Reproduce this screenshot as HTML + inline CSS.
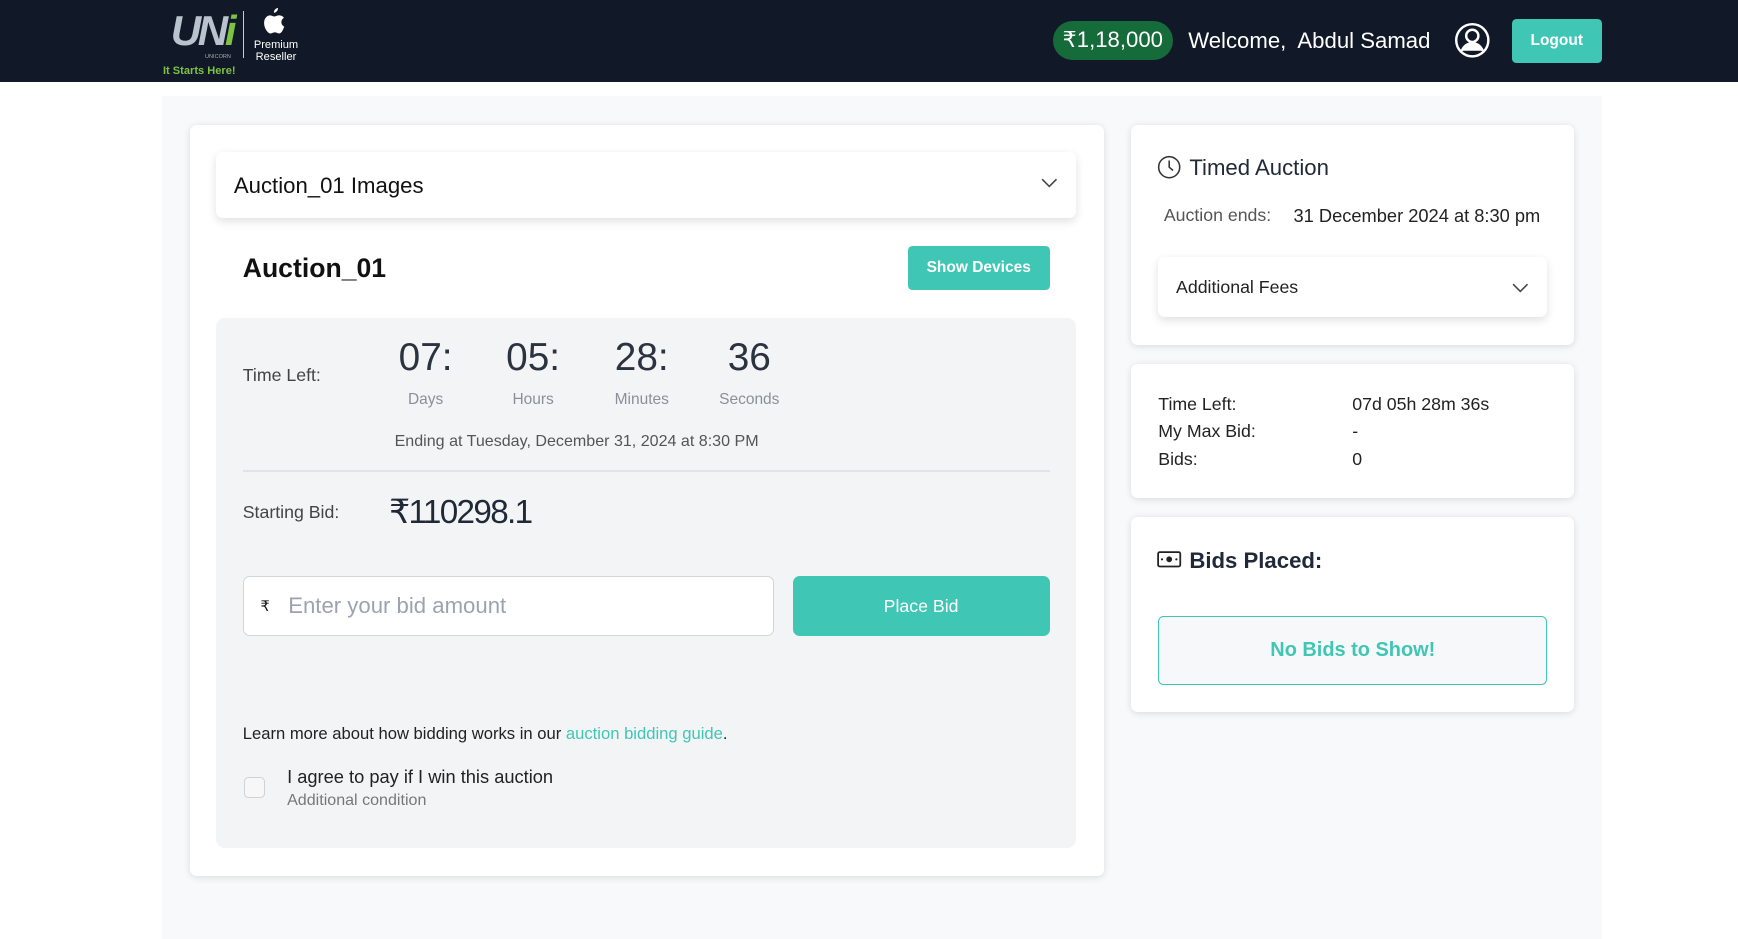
<!DOCTYPE html>
<html><head><meta charset="utf-8"><style>
html{zoom:1.10842}
*{box-sizing:border-box;margin:0;padding:0}
body{width:1568px;height:826px;overflow:hidden;background:#fff;font-family:"Liberation Sans",sans-serif;color:#1f2937;position:relative}
.a{position:absolute}
.nav{left:0;top:0;width:1568px;height:74px;background:#111827}
.card{background:#fff;border-radius:6px;box-shadow:0 1px 6px rgba(0,0,0,.12)}
.teal{background:#40c6b4;color:#fff;border-radius:4px;display:flex;align-items:center;justify-content:center;font-weight:bold}
.num{font-size:35px;color:#2b3340;width:90px;text-align:center;-webkit-text-stroke:0}
.lbl{font-size:14px;color:#8a8f98;width:90px;text-align:center}
</style></head><body>
<div class="a nav"></div>
<!-- logo -->
<div class="a" style="left:154px;top:8px;font-size:38px;font-weight:bold;font-style:italic;color:#b9c3cf;letter-spacing:-3px;line-height:40px">UN<span style="color:#7dc242">i</span></div>
<div class="a" style="left:185px;top:49px;font-size:5px;color:#aaa">UNICORN</div>
<div class="a" style="left:147px;top:59px;font-size:10px;font-weight:bold;color:#7dc242">It Starts Here!</div>
<div class="a" style="left:219px;top:10px;width:1px;height:42px;background:#ccc"></div>
<svg class="a" style="left:237px;top:7px" width="20" height="24" viewBox="0 0 20 24"><path d="M13.5 0c.2 2-1.5 4.2-3.6 4.3-.3-2 1.5-4.1 3.6-4.3zM16.6 12.7c0 3 2.6 4 2.6 4-.6 2-2.4 6.3-4.6 6.3-1.6 0-2-1-3.9-1-1.9 0-2.4 1-3.9 1C4.6 23 1 18.6 1 13.4 1 9 3.8 6.6 6.4 6.6c1.7 0 2.8 1.1 4 1.1 1.1 0 2.6-1.2 4.4-1.1.7 0 2.8.3 4.1 2.2-.1.1-2.3 1.4-2.3 3.9z" fill="#fff"/></svg>
<div class="a" style="left:229px;top:35px;font-size:10px;color:#fff;text-align:center;line-height:11px">Premium<br>Reseller</div>
<div class="a" style="left:950px;top:19px;width:108px;height:35px;border-radius:18px;background:#166b3a;color:#fff;font-size:20px;display:flex;align-items:center;justify-content:center">₹1,18,000</div>
<div class="a" style="left:1072px;top:25px;font-size:20px;color:#fff">Welcome,&nbsp; Abdul Samad</div>
<svg class="a" style="left:1312px;top:20px" width="33" height="33" viewBox="0 0 33 33"><circle cx="16.5" cy="16.5" r="14.5" fill="none" stroke="#fff" stroke-width="2.2"/><circle cx="16.5" cy="12.5" r="5.5" fill="none" stroke="#fff" stroke-width="2.2"/><path d="M7 26c2-5 6-7 9.5-7s7.5 2 9.5 7" fill="#fff" stroke="#fff" stroke-width="2"/></svg>
<div class="a teal" style="left:1364px;top:17px;width:81px;height:40px;font-size:14px">Logout</div>

<div class="a" style="left:146px;top:87px;width:1299px;height:760px;background:#f8f9fa"></div>
<!-- left card -->
<div class="a card" style="left:171px;top:113px;width:825px;height:677px"></div>
<div class="a card" style="left:195px;top:137px;width:776px;height:60px;box-shadow:0 3px 8px rgba(0,0,0,.12)"></div>
<div class="a" style="left:211px;top:156px;font-size:20px;color:#111">Auction_01 Images</div>
<svg class="a" style="left:939px;top:160px" width="15" height="10"><path d="M1 2l6.5 6.5L14 2" fill="none" stroke="#444" stroke-width="1.4"/></svg>
<div class="a" style="left:219px;top:228px;font-size:24px;font-weight:bold;color:#111">Auction_01</div>
<div class="a teal" style="left:819px;top:222px;width:128px;height:40px;font-size:14px">Show Devices</div>
<div class="a" style="left:195px;top:287px;width:776px;height:478px;background:#f3f4f6;border-radius:8px"></div>
<div class="a" style="left:219px;top:329px;font-size:16px;color:#444">Time Left:</div>
<div class="a num" style="left:339px;top:303px">07:</div>
<div class="a num" style="left:436px;top:303px">05:</div>
<div class="a num" style="left:534px;top:303px">28:</div>
<div class="a num" style="left:631px;top:303px">36</div>
<div class="a lbl" style="left:339px;top:353px">Days</div>
<div class="a lbl" style="left:436px;top:353px">Hours</div>
<div class="a lbl" style="left:534px;top:353px">Minutes</div>
<div class="a lbl" style="left:631px;top:353px">Seconds</div>
<div class="a" style="left:356px;top:390px;font-size:14.5px;color:#555">Ending at Tuesday, December 31, 2024 at 8:30 PM</div>
<div class="a" style="left:219px;top:424px;width:728px;height:2px;background:#e1e3e6"></div>
<div class="a" style="left:219px;top:453px;font-size:16px;color:#444">Starting Bid:</div>
<div class="a" style="left:351px;top:444px;font-size:30px;color:#1f2937;letter-spacing:-1.5px">₹110298.1</div>
<div class="a" style="left:219px;top:520px;width:479px;height:54px;background:#fff;border:1px solid #d1d5db;border-radius:6px"></div>
<div class="a" style="left:235px;top:540px;font-size:13px;color:#111">₹</div>
<div class="a" style="left:260px;top:535px;font-size:20px;color:#9ca3af">Enter your bid amount</div>
<div class="a teal" style="left:715px;top:520px;width:232px;height:54px;font-size:16px;border-radius:6px;font-weight:normal">Place Bid</div>
<div class="a" style="left:219px;top:653px;font-size:15px;color:#222">Learn more about how bidding works in our <span style="color:#40c6b4">auction bidding guide</span>.</div>
<div class="a" style="left:220px;top:701px;width:19px;height:19px;border:1.5px solid #cfd3d8;border-radius:4px;background:#f7f7f8"></div>
<div class="a" style="left:259px;top:691px;font-size:16.5px;color:#222">I agree to pay if I win this auction</div>
<div class="a" style="left:259px;top:714px;font-size:14.5px;color:#777">Additional condition</div>

<!-- right cards -->
<div class="a card" style="left:1020px;top:113px;width:400px;height:198px"></div>
<svg class="a" style="left:1044px;top:140px" width="22" height="22" viewBox="0 0 22 22"><circle cx="11" cy="11" r="9.5" fill="none" stroke="#333" stroke-width="1.4"/><path d="M11 5v6l3.5 3" fill="none" stroke="#333" stroke-width="1.4"/></svg>
<div class="a" style="left:1073px;top:140px;font-size:20px;color:#1f2937">Timed Auction</div>
<div class="a" style="left:1050px;top:185px;font-size:16px;color:#555">Auction ends:</div>
<div class="a" style="left:1167px;top:185px;font-size:16.5px;color:#222">31 December 2024 at 8:30 pm</div>
<div class="a card" style="left:1045px;top:232px;width:351px;height:54px;box-shadow:0 3px 8px rgba(0,0,0,.12)"></div>
<div class="a" style="left:1061px;top:250px;font-size:16px;color:#222">Additional Fees</div>
<svg class="a" style="left:1364px;top:254px" width="15" height="10"><path d="M1 2l6.5 6.5L14 2" fill="none" stroke="#444" stroke-width="1.4"/></svg>

<div class="a card" style="left:1020px;top:328px;width:400px;height:121px"></div>
<div class="a" style="left:1045px;top:353px;font-size:16px;color:#222;line-height:24.5px">Time Left:<br>My Max Bid:<br>Bids:</div>
<div class="a" style="left:1220px;top:353px;font-size:16px;color:#222;line-height:24.5px">07d 05h 28m 36s<br>-<br>0</div>

<div class="a card" style="left:1020px;top:466px;width:400px;height:176px"></div>
<svg class="a" style="left:1044px;top:497px" width="22" height="15" viewBox="0 0 22 15"><rect x="1" y="1" width="20" height="13" rx="1.5" fill="none" stroke="#222" stroke-width="1.6"/><circle cx="11" cy="7.5" r="2.6" fill="#222"/><circle cx="4.5" cy="7.5" r="1" fill="#222"/><circle cx="17.5" cy="7.5" r="1" fill="#222"/></svg>
<div class="a" style="left:1073px;top:494px;font-size:20px;font-weight:bold;color:#1f2937">Bids Placed:</div>
<div class="a" style="left:1045px;top:556px;width:351px;height:62px;border:1px solid #40c6b4;border-radius:5px;background:#f7f8f9;display:flex;align-items:center;justify-content:center;color:#40c6b4;font-size:18px;font-weight:bold">No Bids to Show!</div>
</body></html>
